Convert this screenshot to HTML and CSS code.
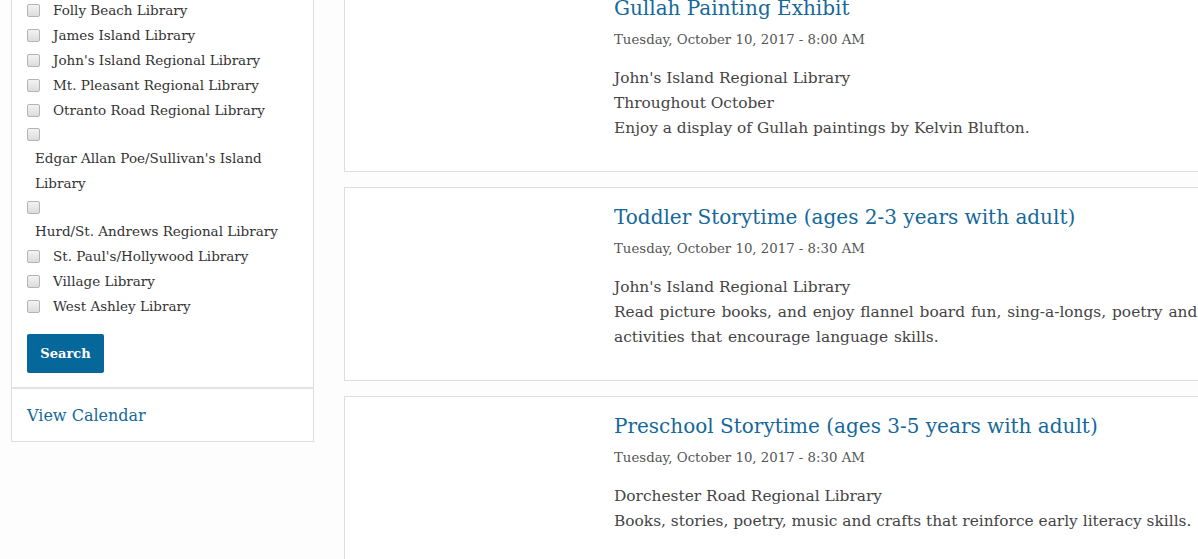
FILE: index.html
```html
<!DOCTYPE html>
<html lang="en">
<head>
<meta charset="utf-8">
<title>Events</title>
<link rel="stylesheet" href="styles.css">
</head>
<body>
<div class="layout">
  <aside class="sidebar">
    <form class="filter">
      <div class="opt"><input type="checkbox" id="l1"><label for="l1">Folly Beach Library</label></div>
      <div class="opt"><input type="checkbox" id="l2"><label for="l2">James Island Library</label></div>
      <div class="opt"><input type="checkbox" id="l3"><label for="l3">John's Island Regional Library</label></div>
      <div class="opt"><input type="checkbox" id="l4"><label for="l4">Mt. Pleasant Regional Library</label></div>
      <div class="opt"><input type="checkbox" id="l5"><label for="l5">Otranto Road Regional Library</label></div>
      <div class="opt long"><input type="checkbox" id="l6"><label for="l6">Edgar Allan Poe/Sullivan's Island Library</label></div>
      <div class="opt long"><input type="checkbox" id="l7"><label for="l7">Hurd/St. Andrews Regional Library</label></div>
      <div class="opt"><input type="checkbox" id="l8"><label for="l8">St. Paul's/Hollywood Library</label></div>
      <div class="opt"><input type="checkbox" id="l9"><label for="l9">Village Library</label></div>
      <div class="opt"><input type="checkbox" id="l10"><label for="l10">West Ashley Library</label></div>
      <button type="button" class="btn">Search</button>
    </form>
    <div class="cal-link"><a href="#">View Calendar</a></div>
  </aside>
  <main class="events">
    <article class="event">
      <div class="thumb"></div>
      <div class="info">
        <h2 class="title"><a href="#">Gullah Painting Exhibit</a></h2>
        <div class="date">Tuesday, October 10, 2017 - 8:00 AM</div>
        <div class="desc">
          <div>John's Island Regional Library</div>
          <div>Throughout October</div>
          <div>Enjoy a display of Gullah paintings by Kelvin Blufton.</div>
        </div>
      </div>
    </article>
    <article class="event">
      <div class="thumb"></div>
      <div class="info">
        <h2 class="title"><a href="#">Toddler Storytime (ages 2-3 years with adult)</a></h2>
        <div class="date">Tuesday, October 10, 2017 - 8:30 AM</div>
        <div class="desc">
          <div>John's Island Regional Library</div>
          <div class="wide">Read picture books, and enjoy flannel board fun, sing-a-longs, poetry and other activities that encourage language skills.</div>
        </div>
      </div>
    </article>
    <article class="event">
      <div class="thumb"></div>
      <div class="info">
        <h2 class="title"><a href="#">Preschool Storytime (ages 3-5 years with adult)</a></h2>
        <div class="date">Tuesday, October 10, 2017 - 8:30 AM</div>
        <div class="desc">
          <div>Dorchester Road Regional Library</div>
          <div>Books, stories, poetry, music and crafts that reinforce early literacy skills.</div>
        </div>
      </div>
    </article>
  </main>
</div>
</body>
</html>
```
FILE: styles.css
```css
html, body {
  margin: 0;
  padding: 0;
  background: #fdfdfd;
  overflow: hidden;
  height: 559px;
}
body {
  font-family: "DejaVu Serif", "Liberation Serif", serif;
  color: #444;
}
.layout {
  display: flex;
  align-items: flex-start;
  padding-left: 11px;
}
.sidebar {
  width: 303px;
  flex: none;
  margin-top: -18px;
  background: #fff;
}
.filter {
  border: 1px solid #ddd;
  padding: 15px 15px 14px 15px;
  font-size: 13.5px;
}
.opt {
  line-height: 25px;
  display: flex;
  align-items: center;
}
.opt input {
  appearance: none;
  -webkit-appearance: none;
  width: 13px;
  height: 13px;
  margin: 0 5px 0 0;
  border: 1px solid #b4b4b4;
  border-radius: 2px;
  background: linear-gradient(#f3f3f3, #dcdcdc);
  flex: none;
}
.opt label {
  padding-left: 8px;
  color: #333;
}
.opt.long {
  display: block;
  padding-top: 5px;
}
.opt.long input {
  display: block;
  margin-bottom: 5px;
}
.opt.long label {
  display: block;
  padding-left: 8px;
  width: 254px;
  line-height: 25px;
}
.btn {
  margin-top: 15px;
  display: block;
  background: #06679a;
  color: #fff;
  border: 0;
  border-radius: 2px;
  font-family: inherit;
  font-weight: bold;
  font-size: 13px;
  width: 77px;
  height: 39px;
  padding: 0;
}
.cal-link {
  border: 1px solid #ddd;
  border-top-width: 2px;
  border-top-color: #e2e2e2;
  margin-top: -1px;
  padding: 15px 15px 14px 15px;
  line-height: 23px;
}
.cal-link a {
  color: #15689a;
  text-decoration: none;
  font-size: 16px;
}
.events {
  margin-left: 30px;
  margin-top: -22px;
  width: 960px;
  flex: none;
  display: flex;
  flex-direction: column;
  gap: 15px;
}
.event {
  display: flex;
  border: 1px solid #ddd;
  background: #fff;
  height: 192px;
}
.thumb {
  width: 269px;
  flex: none;
}
.info {
  padding-top: 15px;
  width: 690px;
}
.title {
  margin: 0;
  font-weight: normal;
  font-size: 20px;
  line-height: 28px;
}
.title a {
  color: #15689a;
  text-decoration: none;
}
.date {
  margin-top: 8px;
  font-size: 13.3px;
  line-height: 20px;
  color: #555;
}
.desc {
  margin-top: 16px;
  font-size: 15.4px;
  line-height: 25px;
  color: #444;
}
.desc .wide {
  word-spacing: 1px;
}
```
